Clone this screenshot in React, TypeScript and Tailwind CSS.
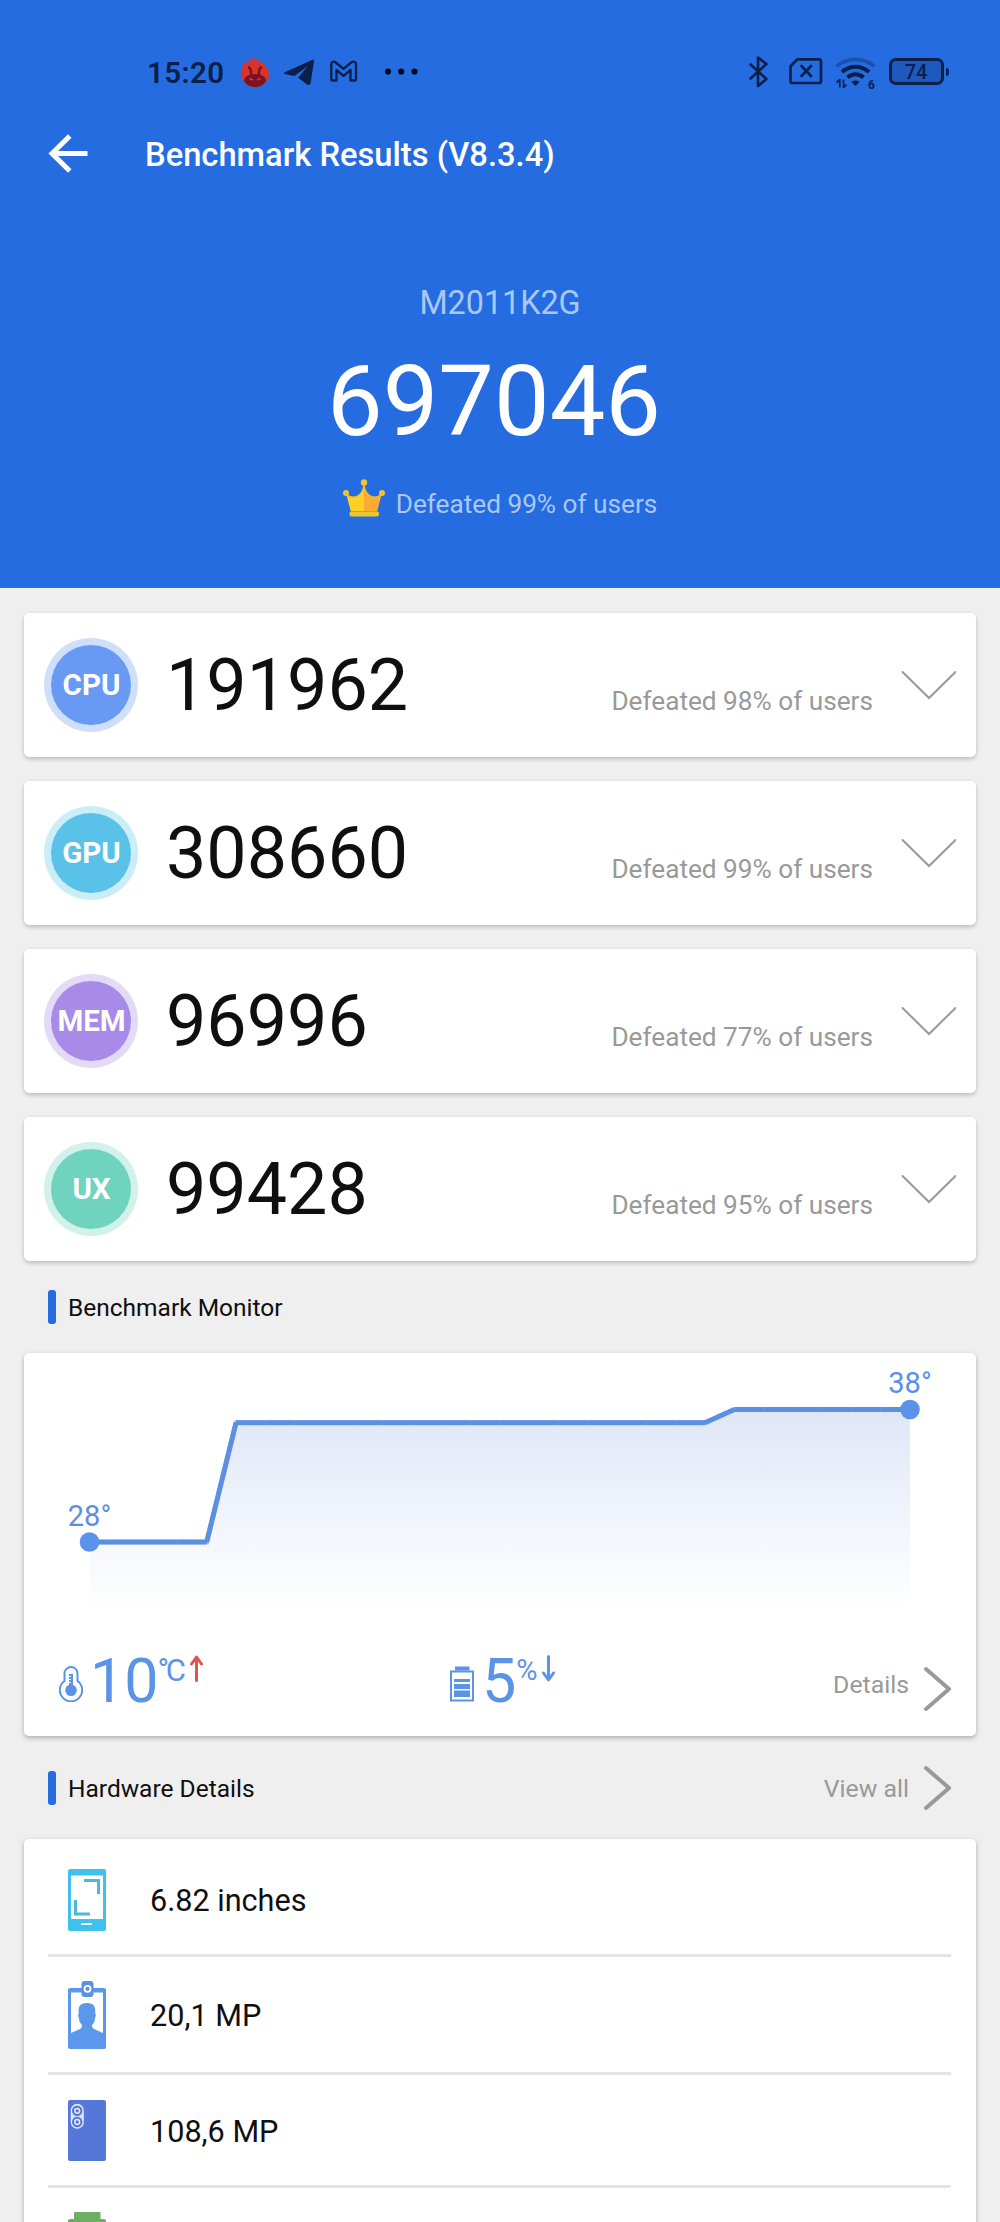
// Benchmark results screen
import { ReactNode } from 'react';

type Score = {
  label: string;
  value: string;
  percent: number;
  badge: string;
};

const scores: Score[] = [
  { label: 'CPU', value: '191962', percent: 98, badge: 'bg-[#cfdffa] before:bg-[#689af3]' },
  { label: 'GPU', value: '308660', percent: 99, badge: 'bg-[#cbedf7] before:bg-[#5ac1e8]' },
  { label: 'MEM', value: '96996', percent: 77, badge: 'bg-[#e3daf8] before:bg-[#a88ae8]' },
  { label: 'UX', value: '99428', percent: 95, badge: 'bg-[#d2f1ea] before:bg-[#70d3be]' },
];

// y position of each temperature sample, one every 29.3px
const samples = [189, 189, 189, 189, 189, ...Array(17).fill(69.7), ...Array(7).fill(56.5)];
const points = samples.map((y, i) => ({ x: 65.5 + i * 29.305, y }));
const path = points.map((p) => `${p.x},${p.y}`).join(' ');

const StatusBar = () => (
  <div className="mt-[52px] flex h-10 items-center pl-[147px] pr-[51px] text-[#0a1f4a]">
    <span className="w-[93px] pt-px text-[29.5px] leading-10 font-semibold tracking-[0.4px]">15:20</span>
    <svg className="h-10 w-[30px]" viewBox="0 0 30 40">
      <path
        d="M1 21.500C.8 17 2.500 14 4 10l1.800 2.500L9 6.500l1.500 3L15 4l1.500 5 2.500-3 1.500 5.500L23.500 10c0 3 5.500 6 5.500 12 0 7.500-6 13-14 13S1 29 1 21.500z"
        fill="#d7342b"
      />
      <path d="M4 29c0-3.500 4-7 11-7s11 3.500 11 7c-2 3.700-6 6-11 6s-9-2.300-11-6z" fill="#7a1420" />
      <path d="M8 15.500c2.500-.5 3 2 3.200 8M22 15.500c-2.500-.5-3 2-3.200 8" stroke="#7a1420" strokeWidth="2.400" fill="none" />
      <path d="M9.500 26.500l3.500 1.500M20.500 26.500 17 28" stroke="#d7342b" strokeWidth="1.800" />
    </svg>
    <svg className="ml-3.5 h-10 w-[30px]" viewBox="0 0 30 40" fill="currentColor">
      <path d="M.8 20.200 28 8c1.300-.5 2.200.2 2 1.600L26.600 31c-.3 2-1.800 2.500-3.400 1.400L15 26.500c-.7-.5-.7-1.200 0-1.900L24 14 11.500 23.200c-1 .7-2 .8-3 .5L1 22c-1.200-.4-1.200-1.300-.2-1.800z" />
    </svg>
    <svg className="ml-4 h-10 w-7" viewBox="0 0 28 40" fill="none" stroke="currentColor" strokeWidth="2.300" strokeLinejoin="round">
      <path d="M1.300 27.500V12c0-2.500 2.500-3 4.500-1.500l7.700 6.300 7.700-6.300C23.200 9 26 9.500 26 12v15.500c0 .8-.5 1-1 1h-4.500V18l-7 5.800-7-5.800v10.500H2.300c-.6 0-1-.3-1-1z" />
    </svg>
    <svg className="ml-6 h-10 w-9" viewBox="0 0 36 40" fill="#020a1a">
      <circle cx="6" cy="19.500" r="3.100" />
      <circle cx="19.200" cy="19.500" r="3.100" />
      <circle cx="32.500" cy="19.500" r="3.100" />
    </svg>
    <svg className="ml-auto h-10 w-5" viewBox="0 0 20 40" fill="none" stroke="currentColor" strokeWidth="2.600" strokeLinejoin="round" strokeLinecap="round">
      <path d="M1.500 12.500 17.500 27 9 34V5.500l8.500 6.500L1.500 26.500" />
    </svg>
    <svg className="ml-[19px] h-10 w-[35px]" viewBox="0 0 35 40" fill="none" stroke="currentColor" strokeWidth="2.700" strokeLinejoin="round" strokeLinecap="round">
      <path d="M9.500 7.300H31c1.200 0 2 .8 2 2V29c0 1.200-.8 2-2 2H4.500c-1.200 0-2-.8-2-2V14.300z" />
      <path d="m13.500 14 9.500 10m0-10-9.500 10" />
    </svg>
    <svg className="ml-3 h-10 w-[41px]" viewBox="0 0 41 40" fill="none" stroke="currentColor">
      <path d="M1.500 14.500c11-9.500 27-9.500 38 0" stroke="#1a50ae" strokeWidth="3.600" />
      <path d="M7 20c8-7 19-7 27 0" strokeWidth="4" />
      <path d="M12.500 25.500c5-4.300 11-4.300 16 0" strokeWidth="4" />
      <path d="M16.500 30c2.300-2 5.700-2 8 0l-4 4z" fill="currentColor" stroke="none" />
      <path d="M4.800 27v8.500M1.500 30.500l3.300-3M8.500 36v-8.500M11.500 32.500l-3 3" strokeWidth="1.700" />
      <text x="33" y="36.500" fontSize="12" fontWeight="700" fill="currentColor" stroke="none">6</text>
    </svg>
    <div className="ml-[13px] flex items-center">
      <div className="mb-px flex h-[27px] w-[55px] items-center justify-center rounded-[7px] border-[3.500px] border-current bg-[#2059be] text-[20px] leading-none font-medium">
        74
      </div>
      <div className="mb-px ml-[2px] h-2 w-[3.500px] rounded-r-sm bg-current" />
    </div>
  </div>
);

const Crown = () => (
  <svg className="mb-[13px] h-[38px] w-[42px]" viewBox="0 0 42 38">
    <path d="M3 14c4 6 16 6 18-8v27H8z" fill="#fdd023" />
    <path d="M39 14c-4 6-16 6-18-8v27h13z" fill="#fbab33" />
    <path d="M3.500 15c4 5 15.500 5 17.500-9 2 14 13.500 14 17.500 9" fill="none" stroke="#e9bd33" strokeWidth="1.300" />
    <rect x="6.500" y="32.500" width="29.500" height="5" rx="2" fill="#eec52c" />
    <path d="M8 32.500h26.500" stroke="#cf9f35" strokeWidth="1" />
    <circle cx="21" cy="3.500" r="3.200" fill="#efc52b" />
    <circle cx="3" cy="14" r="3" fill="#efc52b" />
    <circle cx="39" cy="14" r="3" fill="#efc52b" />
  </svg>
);

const ScoreCard = ({ label, value, percent, badge }: Score) => (
  <div className="flex h-36 items-center rounded-[5px] bg-white pl-5 pr-5 shadow-[0_2px_4px_rgba(0,0,0,0.22)]">
    <div className={`relative isolate flex size-[94px] items-center justify-center rounded-full pt-0.5 pl-px text-[29.500px] leading-none font-bold text-white before:absolute before:inset-[7px] before:-z-10 before:rounded-full ${badge}`}>
      {label}
    </div>
    <div className="ml-7 flex flex-1 items-baseline justify-between pt-0.5">
      <span className="text-[71.800px] leading-[72px] text-[#0f0f0f]">{value}</span>
      <span className="text-[26.200px] text-[#999]">Defeated {percent}% of users</span>
    </div>
    <svg className="ml-[26px] h-[30px] w-[57px] pl-px" viewBox="0 0 56 30" fill="none" stroke="#999" strokeWidth="2" strokeLinecap="round">
      <path d="m2.500 2 26.500 26 26.500-26" />
    </svg>
  </div>
);

const SectionTitle = ({ title, children }: { title: string; children?: ReactNode }) => (
  <div className="flex h-full items-center pl-6 pr-[25px]">
    <div className="h-[34px] w-2 rounded-[3px] bg-[#256ce0]" />
    <h2 className="ml-3 pt-[3px] text-[24.500px] text-[#0f0f0f]">{title}</h2>
    {children}
  </div>
);

const MoreLink = ({ text, className }: { text: string; className?: string }) => (
  <div className={`ml-auto flex items-center text-[24.800px] text-[#999] ${className ?? ''}`}>
    <span className="pt-[3px]">{text}</span>
    <svg className="ml-3.5 h-[46px] w-7" viewBox="0 0 28 46" fill="none" stroke="#999" strokeWidth="4" strokeLinecap="round" strokeLinejoin="round">
      <path d="m3 3 23 20L3 43" />
    </svg>
  </div>
);

const TemperatureChart = () => (
  <svg className="block h-[272px] w-full" viewBox="0 0 952 272" fontSize="29" fill="#5b8fe4">
    <defs>
      <linearGradient id="area" x1="0" y1="56" x2="0" y2="256" gradientUnits="userSpaceOnUse">
        <stop offset="0" stopColor="#dfe6f7" />
        <stop offset="0.500" stopColor="#eff3fc" />
        <stop offset="1" stopColor="#ffffff" />
      </linearGradient>
    </defs>
    <polygon points={`65.5,256 ${path} 886,256`} fill="url(#area)" />
    <polyline points={path} fill="none" stroke="#5b8fe1" strokeWidth="4.500" strokeOpacity="0.6" />
    {points.slice(1).map((p, i) => (
      <line key={i} x1={points[i].x} y1={points[i].y} x2={p.x} y2={p.y} stroke="#5b8fe1" strokeWidth="5" />
    ))}
    <circle cx="65.500" cy="189" r="9.800" fill="#5b93ea" />
    <circle cx="886" cy="56.500" r="9.800" fill="#5b93ea" />
    <text x="65.500" y="172.500" textAnchor="middle">28°</text>
    <text x="886" y="40" textAnchor="middle">38°</text>
  </svg>
);

const Arrow = ({ down }: { down?: boolean }) => (
  <svg className={`h-[27px] w-[13px] ${down ? 'rotate-180 text-[#5b93ea]' : 'text-[#e2534f]'}`} viewBox="0 0 13 27" fill="none" stroke="currentColor" strokeWidth="3" strokeLinecap="round" strokeLinejoin="round">
    <path d="M6.500 25.500V2.500M1.500 9l5-7 5 7" />
  </svg>
);

const MonitorStats = () => (
  <div className="flex h-[111px] items-center pl-[35px] pr-[25px] text-[#5b93e6]">
    <div className="flex w-[391px] items-center">
      <svg className="mt-1.5 h-9 w-6" viewBox="0 0 24 36" fill="none" stroke="currentColor" strokeWidth="2">
        <path d="M5.500 15V7.500a6.500 6.500 0 0 1 13 0V15a11.200 11.200 0 1 1-13 0z" />
        <circle cx="12" cy="24.300" r="5.800" fill="currentColor" stroke="none" />
        <path d="M12 24V8" strokeWidth="4" />
        <path d="M9.500 10.500H12M9.500 13.500H12M9.500 16.500H12" stroke="#fff" strokeWidth="1" />
      </svg>
      <span className="ml-[7px] pt-0.5 text-[61px] leading-[61px]">10</span>
      <span className="mb-5 -ml-px w-[27px] text-[31px] leading-none tracking-[-3.500px]">°C</span>
      <div className="mb-6 ml-[5px]"><Arrow /></div>
    </div>
    <div className="flex items-center">
      <svg className="mt-1.5 h-9 w-6" viewBox="0 0 24 36" fill="currentColor">
        <path d="M5 .5h14.500v4H5z" />
        <path d="M1 5.500h22v29H1z" fill="none" stroke="currentColor" strokeWidth="2" />
        <path d="M4 13h16v3H4zM4 18h16v5H4zM4 24.500h16v6.500H4z" />
      </svg>
      <span className="ml-2 pt-0.5 text-[61px] leading-[61px]">5</span>
      <span className="mb-5 text-[29px] leading-none">%</span>
      <div className="mb-6 ml-1"><Arrow down /></div>
    </div>
    {/* text sits slightly above the centre of the chevron here */}
    <MoreLink text="Details" className="mt-4 [&>span]:-mt-2.5" />
  </div>
);

const ScreenIcon = () => (
  <svg className="h-[62px] w-[38px]" viewBox="0 0 38 62">
    <rect width="38" height="62" rx="2" fill="#3fc1ed" />
    <path d="M3 6.500h32V50H3z" fill="#fff" />
    <path d="M16 11.500h14.500V25M22 45H7.500V31" fill="none" stroke="#4bb9de" strokeWidth="3" />
    <path d="M13 55h11" stroke="#fff" strokeWidth="2" />
  </svg>
);

const FrontCameraIcon = () => (
  <svg className="h-[68px] w-[38px]" viewBox="0 0 38 68">
    <rect y="7" width="38" height="61" rx="2" fill="#5b97ea" />
    <path d="M3 11.500h32V52l-9-4c-1.500-.8-2-2-2-4 2-2 3-4 3-7 1-1 1-4 .2-5 .5-6-1-10-8.200-10s-9 4-8.200 10c-.8 1-.8 4 .2 5 0 3 1 5 3 7 0 2-.5 3.200-2 4l-9 4z" fill="#fff" />
    <rect x="13.500" width="12" height="16" rx="3" fill="#5b91de" />
    <circle cx="19.500" cy="7.800" r="3" fill="none" stroke="#fff" strokeWidth="1.800" />
  </svg>
);

const RearCameraIcon = () => (
  <svg className="h-[61px] w-[38px]" viewBox="0 0 38 61" fill="none" stroke="#e6ebfb">
    <rect width="38" height="61" rx="2" fill="#5577da" stroke="none" />
    <rect x="3.500" y="4.500" width="11.500" height="23.500" rx="5.700" strokeWidth="1.500" fill="#dbe2f8" />
    <g stroke="#5577da" strokeWidth="1.500">
      <circle cx="9.200" cy="10.800" r="4.500" fill="#5577da" />
      <circle cx="9.200" cy="22" r="4.500" fill="#5577da" />
    </g>
    <circle cx="9.200" cy="10.800" r="2.400" strokeWidth="1.500" />
    <circle cx="9.200" cy="22" r="2.400" strokeWidth="1.500" />
  </svg>
);

const BatteryIcon = () => (
  <svg className="h-[62px] w-[38px]" viewBox="0 0 38 62" fill="#70ae66">
    <path d="M6 1c0-.6.400-1 1-1h24.500c.6 0 1 .4 1 1v6H36c1.200 0 2 .8 2 2v53H0V9c0-1.200.8-2 2-2h4z" />
  </svg>
);

const HardwareRow = ({ icon, text, className }: { icon: ReactNode; text: string; className: string }) => (
  <div className={`flex items-center border-b-[3px] border-[#e4e4e4] pl-5 ${className}`}>
    {icon}
    <span className="ml-11 pt-[3px] text-[30.600px] text-[#0f0f0f]">{text}</span>
  </div>
);

const App = () => {
  return (
    <div className="h-[2222px] w-full overflow-hidden bg-[#efefef] font-[Roboto,sans-serif]">
      <header className="flex h-[588px] flex-col bg-[#256ce0] text-white">
        <StatusBar />
        <div className="flex h-[124px] items-center pl-12">
          <svg className="h-10 w-10" viewBox="0 0 40 40" fill="none" stroke="#fff" strokeWidth="5">
            <path d="M39.500 19.500H5M21.800 2 4 19.500 21.800 37" />
          </svg>
          <h1 className="ml-[57px] pt-[3px] text-[32.700px] font-medium">Benchmark Results (V8.3.4)</h1>
        </div>
        <p className="mt-[67px] text-center text-[32.300px] leading-10 text-[#a9c8f8]">M2011K2G</p>
        <p className="mt-7 pr-3 text-center text-[99px] leading-[100px]">697046</p>
        <div className="mt-[33px] flex h-10 items-center justify-center">
          <Crown />
          <span className="ml-[11px] pt-0.5 text-[26.200px] text-[#a9c8f8]">Defeated 99% of users</span>
        </div>
      </header>

      <main className="px-6 pt-[25px]">
        <div className="flex flex-col gap-6">
          {scores.map((score) => (
            <ScoreCard key={score.label} {...score} />
          ))}
        </div>

        <div className="h-[92px]">
          <SectionTitle title="Benchmark Monitor" />
        </div>
        <div className="h-[383px] rounded-[5px] bg-white shadow-[0_2px_5px_rgba(0,0,0,0.28)]">
          <TemperatureChart />
          <MonitorStats />
        </div>

        <div className="h-[103px]">
          <SectionTitle title="Hardware Details">
            <MoreLink text="View all" />
          </SectionTitle>
        </div>
        <div className="rounded-[5px] bg-white pl-6 pr-[25px] shadow-[0_2px_5px_rgba(0,0,0,0.28)]">
          <HardwareRow className="h-[118px] pt-1.5" icon={<ScreenIcon />} text="6.82 inches" />
          <HardwareRow className="h-[118px]" icon={<FrontCameraIcon />} text="20,1 MP" />
          <HardwareRow className="h-[113px]" icon={<RearCameraIcon />} text="108,6 MP" />
          <div className="h-28 pl-5 pt-6">
            <BatteryIcon />
          </div>
        </div>
      </main>
    </div>
  );
};

export default App;
